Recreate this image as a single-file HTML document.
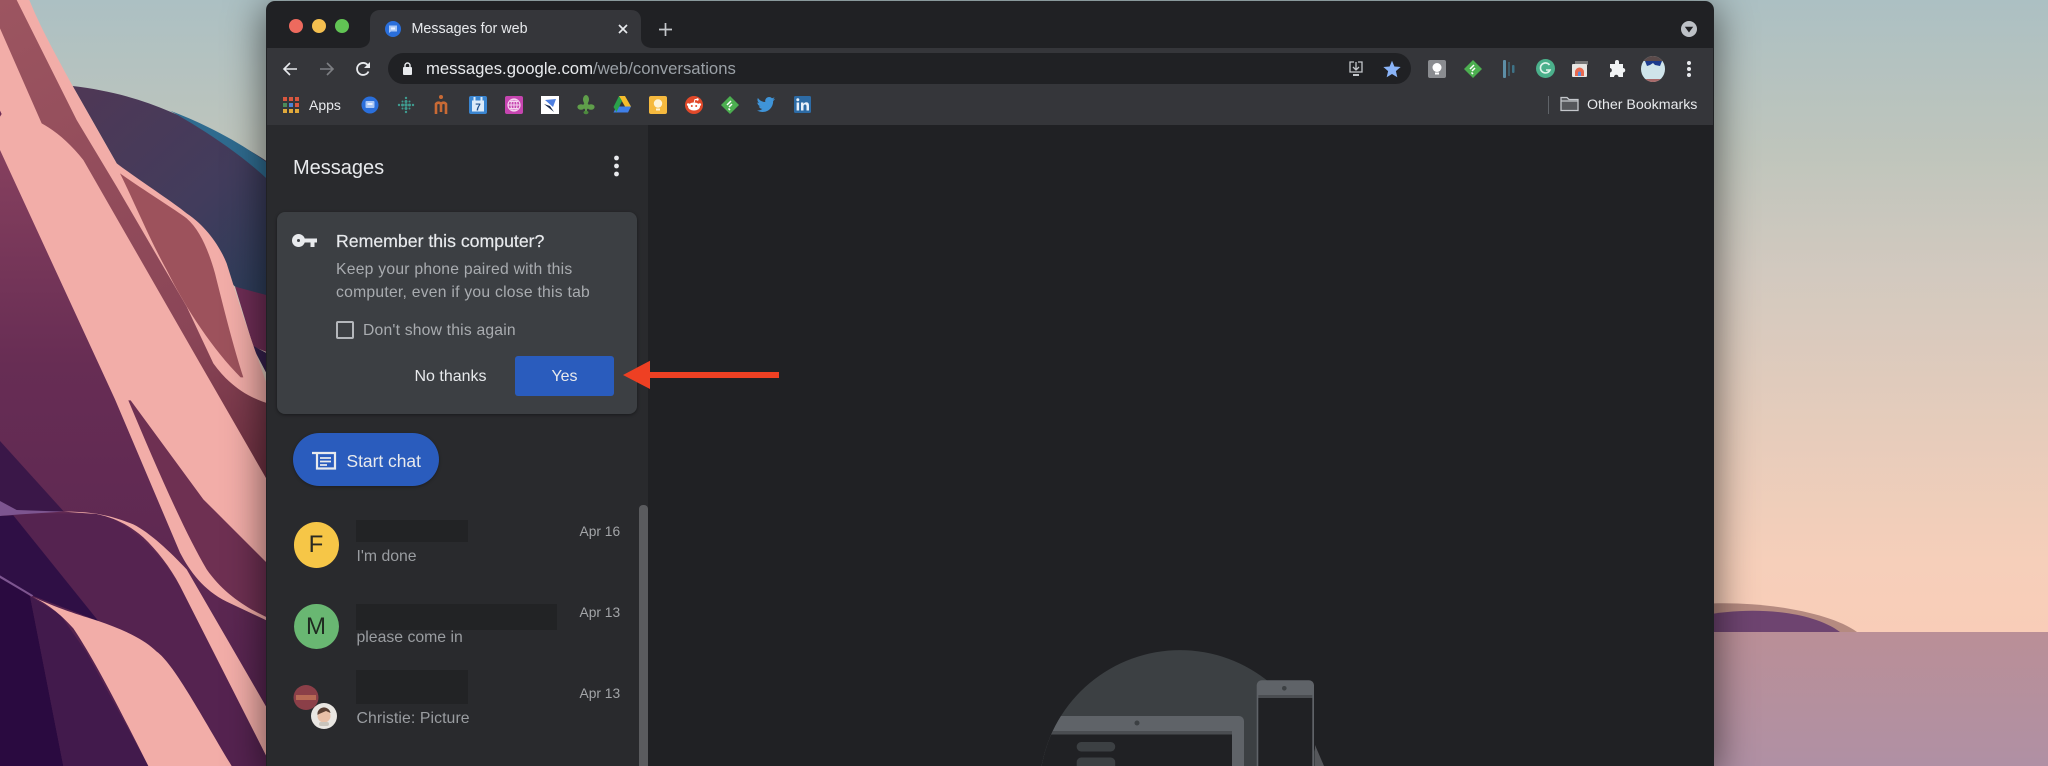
<!DOCTYPE html>
<html><head><meta charset="utf-8"><title>Messages for web</title>
<style>
html,body{margin:0;padding:0;width:2048px;height:766px;overflow:hidden;background:#f9cdb8}
body{position:relative;font-family:"Liberation Sans",sans-serif}
.a{position:absolute}
.t{position:absolute;white-space:nowrap;line-height:20px;height:20px}
#clip{position:absolute;left:0;top:0;width:2048px;height:766px;overflow:hidden}
#win{position:absolute;left:266px;top:1px;width:1448px;height:765px;background:#202124;border-radius:9px 9px 0 0;box-shadow:0 8px 36px 4px rgba(0,0,0,.5)}
svg{position:absolute;overflow:hidden}
</style></head><body><div id="clip">
<svg style="left:0;top:0" width="2048" height="766" viewBox="0 0 2048 766">
<defs>
<linearGradient id="sky" x1="0" y1="0" x2="0" y2="1"><stop offset="0" stop-color="#acc0c3"/><stop offset=".24" stop-color="#bfc5bc"/><stop offset=".43" stop-color="#d2c9bf"/><stop offset=".68" stop-color="#e6ccbb"/><stop offset=".89" stop-color="#f6cfba"/><stop offset="1" stop-color="#f9cdb8"/></linearGradient>
<linearGradient id="wat" x1="0" y1="0" x2="0" y2="1"><stop offset="0" stop-color="#ba8f97"/><stop offset="1" stop-color="#b090a4"/></linearGradient>
<linearGradient id="hill" gradientUnits="userSpaceOnUse" x1="250" y1="280" x2="780" y2="860"><stop offset="0" stop-color="#4e3856"/><stop offset=".6" stop-color="#423c5c"/><stop offset="1" stop-color="#2e3d5a"/></linearGradient>
<linearGradient id="plum" gradientUnits="userSpaceOnUse" x1="0" y1="450" x2="0" y2="2298"><stop offset="0" stop-color="#86405e"/><stop offset=".35" stop-color="#672d54"/><stop offset="1" stop-color="#542350"/></linearGradient>
<linearGradient id="rose" gradientUnits="userSpaceOnUse" x1="0" y1="0" x2="800" y2="1450"><stop offset="0" stop-color="#9c5560"/><stop offset=".7" stop-color="#8a4557"/><stop offset="1" stop-color="#6c2f40"/></linearGradient>
</defs>
<rect width="2048" height="632" fill="url(#sky)"/>
<rect y="632" width="2048" height="134" fill="url(#wat)"/>
<path d="M1700,604 C1760,600 1830,612 1857,632 L1700,632Z" fill="#b58a80"/>
<path d="M1700,616 C1750,606 1810,610 1840,632 L1700,632Z" fill="#6e4470"/>
<g transform="scale(.33333)">
<path d="M218,258 C320,270 420,295 510,335 C620,380 720,430 810,490 L810,900 L705,860 L350,490Z" fill="url(#hill)"/>
<path d="M510,332 C610,370 720,425 810,495 L810,545 C720,460 620,395 510,332Z" fill="#2f6b8f"/>
<path d="M705,860 L810,888 L810,1060 L760,1040Z" fill="#6e2d55"/>
<path d="M755,1035 L810,1065 L810,1140Z" fill="#35204c"/>
<path d="M88,0 C120,80 170,170 218,258 L350,490 C430,550 510,600 560,640 C620,680 660,740 680,790 L730,950 L810,1180 L810,2298 L0,2298 L0,0Z" fill="#f2ada8"/>
<path d="M0,0 L50,0 L230,360 L350,560 L560,920 L640,1090 C690,1160 750,1195 810,1212 L810,1455 L600,1090 L250,480 C210,430 170,395 125,370 L0,85Z" fill="url(#rose)"/>
<path d="M360,520 C430,570 520,625 560,655 C600,690 625,750 645,820 C670,920 700,1040 730,1132 L722,1132 C640,1050 560,930 500,810 C450,720 400,600 360,520Z" fill="#9d525c"/>
<path d="M0,450 L345,1198 L540,1658 C570,1715 610,1770 680,1805 L810,1866 L810,2298 L0,2298Z" fill="url(#plum)"/>
<path d="M385,1201 L392,1201 L610,1498 L810,1698 L810,1856 C740,1825 670,1780 620,1708 C550,1590 460,1380 385,1201Z" fill="#6e3052"/>
<path d="M0,1323 L190,1533 L0,1540Z" fill="#3a1748"/>
<path d="M0,1540 L300,1540 C380,1570 440,1620 500,1698 L540,1758 L810,2298 L0,2298Z" fill="#552350"/>
<path d="M190,1535 C290,1534 340,1550 400,1573 C450,1598 510,1655 560,1708 L810,2140 L810,2290 L540,1758 C510,1700 470,1650 430,1612 C390,1578 350,1555 290,1542Z" fill="#f2ada8"/>
<path d="M0,1503 L50,1530 L190,1535 L60,1543 L0,1548Z" fill="#7d5590"/>
<path d="M0,1548 L40,1546 L295,1863 L100,1788 L0,1728Z" fill="#2f0f45"/>
<path d="M0,1728 L90,1788 L190,2298 L0,2298Z" fill="#2a0a40"/>
<path d="M90,1788 L180,1843 L260,1958 L445,2298 L190,2298Z" fill="#421a4c"/>
<path d="M0,1726 L100,1786 L95,1790 L0,1734Z" fill="#7d5590"/>
<path d="M90,1786 C170,1825 240,1845 295,1863 C360,1885 430,1915 470,1955 C520,1990 600,2140 695,2298 L445,2298 C370,2150 290,1990 220,1885 C180,1840 140,1810 90,1786Z" fill="#f2ada8"/>
<path d="M0,332 L5,342 L0,350Z" fill="#6e2d55"/>
</g>
</svg>

<div id="win"></div>
<!-- chrome bars -->
<div class="a" style="left:267px;top:2px;width:1446px;height:46px;background:#202124;border-radius:8px 8px 0 0"></div>
<div class="a" style="left:267px;top:48px;width:1446px;height:77px;background:#35363a"></div>
<div class="a" style="left:267px;top:125px;width:381px;height:641px;background:#292a2d"></div>
<div class="a" style="left:648px;top:125px;width:1065px;height:641px;background:#202124"></div>
<!-- tab -->
<svg style="left:358px;top:10px" width="295" height="38"><path d="M0,38 C8,38 12,34 12,28 L12,10 C12,4 16,0 22,0 L273,0 C279,0 283,4 283,10 L283,28 C283,34 287,38 295,38Z" fill="#35363a"/></svg>
<div class="a" style="left:289px;top:18.5px;width:14px;height:14px;border-radius:50%;background:#ed6a5e"></div>
<div class="a" style="left:312px;top:18.5px;width:14px;height:14px;border-radius:50%;background:#f4bf4f"></div>
<div class="a" style="left:334.5px;top:18.5px;width:14px;height:14px;border-radius:50%;background:#61c454"></div>
<svg style="left:385px;top:21px" width="16" height="16" viewBox="0 0 16 16"><circle cx="8" cy="8" r="8" fill="#2a6fdb"/><path d="M4,4.5 H12 V10.5 H6 L4,12Z" fill="#a9c7f5"/><rect x="6" y="6.5" width="4" height="2" fill="#e8f0fe"/></svg>
<div class="t" style="left:411.5px;top:19px;font-size:14.3px;color:#e8eaed">Messages for web</div>
<svg style="left:617px;top:23px" width="12" height="12"><path d="M2,2 L10,10 M10,2 L2,10" stroke="#e8eaed" stroke-width="1.7"/></svg>
<svg style="left:658px;top:22px" width="15" height="15"><path d="M7.5,1 V14 M1,7.5 H14" stroke="#c4c7cb" stroke-width="1.7"/></svg>
<svg style="left:1681px;top:21px" width="16" height="16"><circle cx="8" cy="8" r="8" fill="#bdc1c6"/><path d="M3.8,5.8 H12.2 L8,11.5Z" fill="#202124"/></svg>
<!-- nav -->
<svg style="left:282px;top:61px" width="16" height="16" fill="none" stroke="#e8eaed" stroke-width="1.6"><path d="M15,8 H2 M8,2 L2,8 L8,14"/></svg>
<svg style="left:319px;top:61px" width="16" height="16" fill="none" stroke="#7d7f83" stroke-width="1.6"><path d="M1,8 H14 M8,2 L14,8 L8,14"/></svg>
<svg style="left:355px;top:61px" width="16" height="16" viewBox="0 0 16 16" fill="none"><path d="M13.5,10.5 A6,6 0 1 1 13,4.5" stroke="#e8eaed" stroke-width="1.8"/><path d="M15,1 V7 H9Z" fill="#e8eaed"/></svg>
<div class="a" style="left:388px;top:53px;width:1023px;height:31px;background:#202124;border-radius:16px"></div>
<svg style="left:402px;top:62px" width="11" height="14"><rect x="1" y="5" width="9" height="8" rx="1" fill="#e8eaed"/><path d="M3,5.5 V3.5 A2.5,2.5 0 0 1 8,3.5 V5.5" stroke="#e8eaed" stroke-width="1.4" fill="none"/></svg>
<div class="t" style="left:426px;top:59px;font-size:16.7px;color:#e8eaed">messages.google.com<span style="color:#9aa0a6">/web/conversations</span></div>
<svg style="left:1348px;top:60px" width="16" height="18" fill="none" stroke="#c4c7cb" stroke-width="1.3"><path d="M6,2 H2 V12 H14 V2 H10"/><path d="M8,2 V10 M5,7 L8,10 L11,7"/><path d="M5,15 H11" stroke-width="2"/></svg>
<svg style="left:1382.5px;top:60px" width="18" height="18" viewBox="0 0 24 24"><path d="M12,1 L15.2,8.6 L23.5,9.3 L17.2,14.8 L19.1,23 L12,18.6 L4.9,23 L6.8,14.8 L.5,9.3 L8.8,8.6Z" fill="#8ab4f8"/></svg>
<!-- extensions -->
<svg style="left:1428px;top:60px" width="18" height="18"><rect width="18" height="18" rx="2" fill="#8a8c90"/><circle cx="9" cy="7.5" r="4.5" fill="#fff"/><rect x="7" y="12.5" width="4" height="2" fill="#fff"/></svg>
<svg style="left:1464px;top:60px" width="18" height="18"><path d="M9,0 L18,9 L9,18 L0,9Z" fill="#4caf50"/><path d="M6,9 L10,5 M8,11 L11,8 M7.5,12.5 L9,14" stroke="#fff" stroke-width="1.5"/></svg>
<svg style="left:1502px;top:60px" width="14" height="18"><rect x="1" y="0" width="3" height="18" rx="1" fill="#5d8ea6"/><rect x="6" y="2" width="2" height="14" fill="#3d5a66"/><rect x="10" y="5" width="2.5" height="8" rx="1" fill="#3e7387"/></svg>
<svg style="left:1536px;top:59px" width="19" height="19"><circle cx="9.5" cy="9.5" r="9.5" fill="#4bb08b"/><path d="M13.5,6 A5,5 0 1 0 14,11 H10" fill="none" stroke="#dff3ea" stroke-width="1.6"/></svg>
<svg style="left:1572px;top:61px" width="17" height="17"><rect x="3" y="0" width="13" height="4" fill="#777"/><rect x="0" y="3" width="15" height="13" rx="1" fill="#e8e6e3"/><path d="M3,15 V11 A4.5,4.5 0 0 1 12,11 V15Z" fill="#e8694f"/><path d="M6,15 V12 A1.5,1.5 0 0 1 9,12 V15Z" fill="#5a8fe0"/></svg>
<svg style="left:1608px;top:60px" width="18" height="18" viewBox="0 0 18 18"><path d="M7,2 A2,2 0 0 1 11,2 V4 H15 V8 A2.2,2.2 0 0 1 15,12.5 V17 H10.5 A2.2,2.2 0 0 0 6,17 H2 V12.5 A2.3,2.3 0 0 0 2,8 V4 H7Z" fill="#f1f3f4"/></svg>
<svg style="left:1641px;top:56px" width="24" height="26"><defs><clipPath id="av"><ellipse cx="12" cy="13" rx="12" ry="13"/></clipPath></defs><g clip-path="url(#av)"><rect width="24" height="26" fill="#cfe4ea"/><rect y="0" width="24" height="5" fill="#5a4a4a"/><path d="M4,5 H21 L19,10 L14,9 L12,7 L9,9 L6,10Z" fill="#1b3a8c"/><rect y="23" width="24" height="3" fill="#a86a6a"/></g></svg>
<svg style="left:1686px;top:60px" width="6" height="18" fill="#e8eaed"><circle cx="3" cy="3" r="2"/><circle cx="3" cy="9" r="2"/><circle cx="3" cy="15" r="2"/></svg>
<!-- bookmarks -->
<svg style="left:283px;top:97px" width="16" height="16"><g fill="#d9573f"><rect x="0" y="0" width="4" height="4"/><rect x="6" y="0" width="4" height="4"/><rect x="12" y="0" width="4" height="4"/></g><rect x="0" y="6" width="4" height="4" fill="#4c8b5a"/><rect x="6" y="6" width="4" height="4" fill="#4b82d6"/><rect x="12" y="6" width="4" height="4" fill="#d9573f"/><g fill="#e0a93b"><rect x="0" y="12" width="4" height="4"/><rect x="6" y="12" width="4" height="4"/><rect x="12" y="12" width="4" height="4"/></g></svg>
<div class="t" style="left:309px;top:95px;font-size:14px;color:#e8eaed">Apps</div>
<svg style="left:361px;top:96px" width="18" height="18"><circle cx="9" cy="9" r="8.5" fill="#2a6fdb"/><rect x="4.5" y="5" width="9" height="7" rx="1" fill="#a9c7f5"/><rect x="6.5" y="7" width="5" height="2" fill="#e8f0fe"/></svg>
<svg style="left:397px;top:96px" width="18" height="18" fill="#3f9b8f"><circle cx="9" cy="2" r="1.2"/><circle cx="9" cy="5.5" r="1.5"/><circle cx="9" cy="9" r="1.7"/><circle cx="9" cy="12.5" r="1.5"/><circle cx="9" cy="16" r="1.2"/><circle cx="5.5" cy="9" r="1.5"/><circle cx="2" cy="9" r="1.2"/><circle cx="12.5" cy="9" r="1.5"/><circle cx="16" cy="9" r="1.2"/><circle cx="5.5" cy="5.5" r="1"/><circle cx="12.5" cy="5.5" r="1"/><circle cx="5.5" cy="12.5" r="1"/><circle cx="12.5" cy="12.5" r="1"/></svg>
<svg style="left:433px;top:95px" width="16" height="20" fill="none" stroke="#c96a35" stroke-width="2.6"><circle cx="8" cy="2" r="2" fill="#c96a35" stroke="none"/><path d="M3,19 V9 A3,3 0 0 1 8,9 V17 M8,9 A3,3 0 0 1 13,9 V19"/></svg>
<svg style="left:469px;top:96px" width="18" height="18"><rect width="18" height="18" rx="2" fill="#3a85d0"/><rect x="3" y="4.5" width="12" height="11" fill="#dcebfa"/><rect x="4.5" y="1" width="2" height="4" fill="#dcebfa"/><rect x="11.5" y="1" width="2" height="4" fill="#dcebfa"/><text x="9" y="14.5" font-size="10" font-weight="bold" text-anchor="middle" fill="#1e4f8c" font-family="Liberation Sans">7</text></svg>
<svg style="left:505px;top:96px" width="18" height="18" fill="none"><rect width="18" height="18" rx="2" fill="#c645b0"/><circle cx="9" cy="9" r="6" stroke="#f5d5ef" stroke-width="1.2"/><path d="M3,9 H15 M9,3 V15 M5,5.5 H13 M5,12.5 H13" stroke="#f5d5ef" stroke-width="1"/><ellipse cx="9" cy="9" rx="3" ry="6" stroke="#f5d5ef"/></svg>
<svg style="left:541px;top:96px" width="18" height="18"><rect width="18" height="18" fill="#fff"/><path d="M4,4 L15,3 L12,11Z" fill="#4e7fe0"/><path d="M3,8 L9,10 L13,16 L8,12Z" fill="#1b2b4c"/></svg>
<svg style="left:577px;top:95px" width="18" height="20" fill="#5f9e4a"><ellipse cx="9" cy="4.5" rx="3" ry="4.5"/><ellipse cx="9" cy="11" rx="2.8" ry="3.5"/><ellipse cx="4" cy="12" rx="3.6" ry="2.8"/><ellipse cx="14" cy="12" rx="3.6" ry="2.8"/><rect x="8" y="13" width="2" height="6"/><ellipse cx="9" cy="17.5" rx="2.5" ry="1.7" fill="#4d8a3e"/></svg>
<svg style="left:613px;top:96px" width="18" height="17"><path d="M6,0 H12 L18,10.500 H12Z" fill="#f5bd2c"/><path d="M3.5,10.5 H18 L15,16.5 H0.5Z" fill="#3f7fe8"/><path d="M6,0 L9,5 L3.5,16 L.5,11Z" fill="#2aa14b"/></svg>
<svg style="left:649px;top:96px" width="18" height="18"><rect width="18" height="18" rx="2" fill="#f5b93e"/><circle cx="9" cy="7.5" r="4.2" fill="#fdf3d8"/><rect x="7" y="12.5" width="4" height="2" fill="#fdf3d8"/></svg>
<svg style="left:685px;top:96px" width="18" height="18"><circle cx="9" cy="9" r="9" fill="#e2492a"/><ellipse cx="9" cy="10.5" rx="6" ry="4" fill="#fff"/><circle cx="6.8" cy="10" r="1" fill="#e2492a"/><circle cx="11.2" cy="10" r="1" fill="#e2492a"/><circle cx="3.2" cy="8.5" r="1.3" fill="#fff"/><circle cx="14.8" cy="8.5" r="1.3" fill="#fff"/><circle cx="12.5" cy="3.5" r="1.2" fill="#fff"/><path d="M9,7 L10,3.5 L12.5,3.5" stroke="#fff" fill="none"/></svg>
<svg style="left:721px;top:96px" width="18" height="18"><path d="M9,0 L18,9 L9,18 L0,9Z" fill="#4caf50"/><path d="M6,9 L10,5 M8,11 L11,8 M7.5,12.5 L9,14" stroke="#fff" stroke-width="1.5"/></svg>
<svg style="left:757px;top:97px" width="18" height="15" viewBox="0 0 24 20"><path d="M24,2.4 C23,2.9 22,3.2 21,3.3 C22.100,2.600 22.900,1.600 23.300,.4 C22.300,1 21.100,1.400 20,1.700 C17.800,-.6 14.200,-.5 12.200,1.800 C11,3.200 10.600,5 11.100,6.700 C7,6.500 3.500,4.700 1.200,1.300 C0,3.500 .7,6.300 2.800,7.900 C2,7.900 1.200,7.600 .5,7.200 C.5,9.700 2.300,11.800 4.600,12.300 C3.900,12.500 3.100,12.500 2.400,12.400 C3,14.400 4.900,15.900 7.100,15.900 C5,17.500 2.500,18.200 0,18 C2.400,19.400 5,20 7.500,20 C16.500,20 21.800,12.500 21.500,5.300 C22.500,4.600 23.400,3.600 24,2.400Z" fill="#3f94d8"/></svg>
<svg style="left:794px;top:96px" width="17" height="17"><rect width="17" height="17" rx="1.5" fill="#2d6ba5"/><rect x="2.600" y="6.500" width="2.500" height="8" fill="#e8f0fa"/><circle cx="3.800" cy="3.800" r="1.500" fill="#e8f0fa"/><path d="M7,6.500 H9.400 V8 C10,7 11,6.300 12.300,6.300 C14.500,6.300 15,7.800 15,10 V14.500 H12.500 V10.500 C12.500,9.300 12.200,8.500 11.100,8.500 C10,8.500 9.500,9.300 9.500,10.500 V14.500 H7Z" fill="#e8f0fa"/></svg>
<div class="a" style="left:1547.500px;top:96px;width:1px;height:18px;background:#5f6368"></div>
<svg style="left:1559.500px;top:96px" width="19" height="16" fill="none" stroke="#c4c7cb" stroke-width="1.300"><path d="M1,14.500 V1.500 H7 L9,3.500 H18 V14.500Z" fill="#55575b"/><path d="M1,5 H18"/></svg>
<div class="t" style="left:1587px;top:95px;font-size:14.200px;color:#e8eaed">Other Bookmarks</div>
<!-- messages sidebar -->
<div class="t" style="left:293px;top:158px;font-size:20px;color:#e8eaed">Messages</div>
<svg style="left:613px;top:155px" width="7" height="22" fill="#e8eaed"><circle cx="3.500" cy="3" r="2.400"/><circle cx="3.500" cy="11" r="2.400"/><circle cx="3.500" cy="19" r="2.400"/></svg>
<div class="a" style="left:277px;top:212px;width:360px;height:202px;background:#3c3f43;border-radius:8px;box-shadow:0 1px 3px rgba(0,0,0,.4)"></div>
<svg style="left:292px;top:234px" width="26" height="14"><circle cx="6.500" cy="6.500" r="4" fill="none" stroke="#e8eaed" stroke-width="5"/><path d="M11,4.500 H25 V8.500 H22.500 V13 H18.500 V8.500 H11Z" fill="#e8eaed"/></svg>
<div class="t" style="left:336px;top:231px;font-size:17.700px;color:#e8eaed;-webkit-text-stroke:.2px #e8eaed">Remember this computer?</div>
<div class="t" style="left:336px;top:260px;font-size:15.700px;color:#a9acb0;letter-spacing:.25px">Keep your phone paired with this</div>
<div class="t" style="left:336px;top:283px;font-size:15.700px;color:#a9acb0;letter-spacing:.25px">computer, even if you close this tab</div>
<div class="a" style="left:336px;top:321px;width:14px;height:14px;border:2px solid #b4b7bb;border-radius:2px"></div>
<div class="t" style="left:363px;top:320.500px;font-size:15.700px;color:#a9acb0;letter-spacing:.2px">Don't show this again</div>
<div class="t" style="left:414.500px;top:366.500px;font-size:16px;color:#e8eaed">No thanks</div>
<div class="a" style="left:515px;top:356px;width:99px;height:40px;background:#2a5cbd;border-radius:3px"></div>
<div class="t" style="left:515px;top:366.500px;width:99px;text-align:center;font-size:16px;color:#e8eaed">Yes</div>
<svg style="left:620px;top:358px" width="162" height="34"><path d="M3,17 L30,2.700 V14 H159 V20 H30 V31Z" fill="#ee4023"/></svg>
<div class="a" style="left:293px;top:433px;width:146px;height:53px;border-radius:27px;background:#2a5cbd;box-shadow:0 1px 3px rgba(0,0,0,.3)"></div>
<svg style="left:311px;top:451px" width="26" height="19" fill="none" stroke="#e8eaed" stroke-width="2.200"><path d="M1,2 H24 V17.500 H6 V2"/><path d="M9,7 H20 M9,10.500 H20 M9,14 H16" stroke-width="1.800"/></svg>
<div class="t" style="left:346.500px;top:450.500px;font-size:17.400px;color:#e8eaed">Start chat</div>
<!-- conversations -->
<div class="a" style="left:639px;top:505px;width:9px;height:261px;background:#5a5b5e;border-radius:4px 4px 0 0"></div>
<div class="a" style="left:293.500px;top:522px;width:45px;height:45.500px;border-radius:50%;background:#f6c647;text-align:center;line-height:46px;font-size:24px;color:#2a2a22">F</div>
<div class="a" style="left:355.500px;top:520px;width:112.500px;height:22px;background:#222325"></div>
<div class="t" style="left:579.500px;top:522px;font-size:13.800px;color:#a3a5a8">Apr 16</div>
<div class="t" style="left:356.500px;top:546.500px;font-size:15.800px;color:#9a9da1">I'm done</div>
<div class="a" style="left:293.500px;top:603.500px;width:45px;height:45.500px;border-radius:50%;background:#69b772;text-align:center;line-height:46px;font-size:24px;color:#1f2a20">M</div>
<div class="a" style="left:355.500px;top:604px;width:201.500px;height:26px;background:#222325"></div>
<div class="t" style="left:579.500px;top:602.500px;font-size:13.800px;color:#a3a5a8">Apr 13</div>
<div class="t" style="left:356.500px;top:628px;font-size:15.800px;color:#9a9da1">please come in</div>
<svg style="left:293px;top:685px" width="45" height="45"><circle cx="13" cy="12.500" r="12.500" fill="#8b3f48"/><rect x="3" y="10" width="20" height="5" fill="#b86a55"/><circle cx="31" cy="31" r="13" fill="#e9e6e2"/><circle cx="31" cy="31" r="6.500" fill="#e8c0a8"/><path d="M24.500,30 A6.500,6.500 0 0 1 37.500,28 L33,26 L26,29Z" fill="#5a4034"/><rect x="26" y="37" width="10" height="4" rx="2" fill="#c9c4bc"/></svg>
<div class="a" style="left:355.500px;top:669.500px;width:112.500px;height:34px;background:#222325"></div>
<div class="t" style="left:579.500px;top:684px;font-size:13.800px;color:#a3a5a8">Apr 13</div>
<div class="t" style="left:356.500px;top:709px;font-size:15.800px;letter-spacing:.1px;color:#9a9da1">Christie: Picture</div>
<!-- illustration -->
<svg style="left:0;top:0" width="2048" height="766" viewBox="0 0 2048 766">
<defs><clipPath id="cc"><path d="M1041.600,766 A140.600,140.600 0 0 1 1318.400,766Z"/></clipPath></defs>
<path d="M1041.600,766 A140.600,140.600 0 0 1 1318.400,766Z" fill="#3c4043"/>
<path d="M1315,745 L1324,766 L1315,766Z" fill="#55575b"/>
<g clip-path="url(#cc)">
<path d="M1030,766 V721 A5,5 0 0 1 1035,716 H1239 A5,5 0 0 1 1244,721 V766Z" fill="#5f6368"/>
<rect x="1030" y="731" width="202" height="4" fill="#4a4d51"/>
<rect x="1030" y="734.500" width="202" height="31.500" fill="#202124"/>
<circle cx="1137" cy="723" r="2.500" fill="#3c4043"/>
<rect x="1076.700" y="742" width="38.500" height="9.500" rx="4.500" fill="#3c4043"/>
<path d="M1076.700,766 V762 A4.500,4.500 0 0 1 1081.200,757.500 H1110.700 A4.500,4.500 0 0 1 1115.200,762 V766Z" fill="#3c4043"/>
</g>
<path d="M1256.700,766 V685 A5,5 0 0 1 1261.700,680.300 H1309 A5,5 0 0 1 1314,685 V766Z" fill="#5f6368"/>
<rect x="1258.300" y="695" width="54" height="3" fill="#4a4d51"/>
<rect x="1258.300" y="698" width="54" height="68" fill="#202124"/>
<circle cx="1284.300" cy="688.300" r="2.300" fill="#3c4043"/>
</svg>
</div></body></html>
